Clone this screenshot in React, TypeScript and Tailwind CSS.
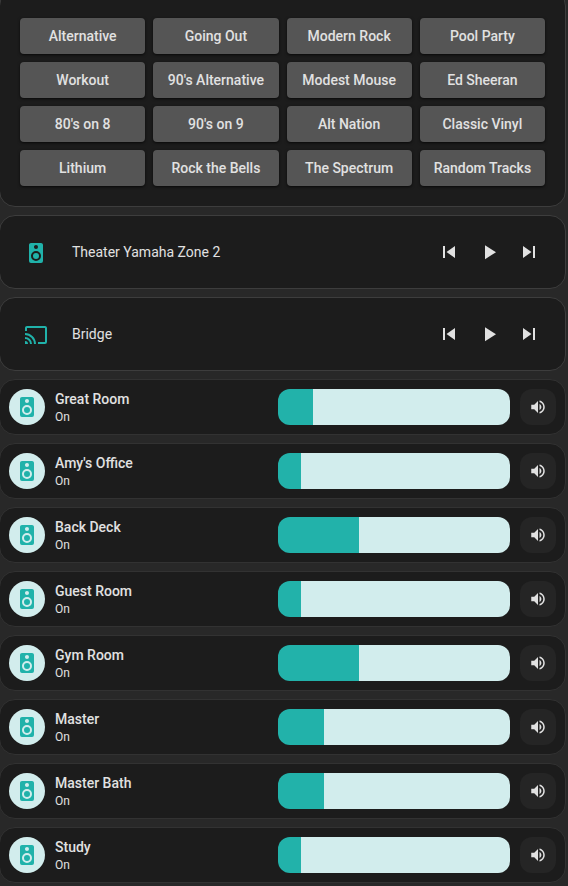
import { useState } from "react";

const ICONS = {
  speaker:
    "M12,12A3,3 0 0,0 9,15A3,3 0 0,0 12,18A3,3 0 0,0 15,15A3,3 0 0,0 12,12M12,20A5,5 0 0,1 7,15A5,5 0 0,1 12,10A5,5 0 0,1 17,15A5,5 0 0,1 12,20M12,4A2,2 0 0,1 14,6A2,2 0 0,1 12,8C10.89,8 10,7.1 10,6C10,4.89 10.89,4 12,4M17,2H7C5.89,2 5,2.89 5,4V20A2,2 0 0,0 7,22H17A2,2 0 0,0 19,20V4C19,2.89 18.1,2 17,2Z",
  cast: "M1,10V12A9,9 0 0,1 10,21H12C12,14.92 7.07,10 1,10M1,14V16A5,5 0 0,1 6,21H8A7,7 0 0,0 1,14M1,18V21H4A3,3 0 0,0 1,18M21,3H3C1.89,3 1,3.89 1,5V8H3V5H21V19H14V21H21A2,2 0 0,0 23,19V5C23,3.89 22.1,3 21,3Z",
  previous: "M6,18V6H8V18H6M9.5,12L18,6V18L9.5,12Z",
  play: "M8,5.14V19.14L19,12.14L8,5.14Z",
  next: "M16,18H18V6H16M6,18L14.5,12L6,6V18Z",
  volume:
    "M14,3.23V5.29C16.89,6.15 19,8.83 19,12C19,15.17 16.89,17.84 14,18.7V20.77C18,19.86 21,16.28 21,12C21,7.72 18,4.14 14,3.23M16.5,12C16.5,10.23 15.5,8.71 14,7.97V16C15.5,15.29 16.5,13.76 16.5,12M3,9V15H7L12,20V4L7,9H3Z",
};

type IconName = keyof typeof ICONS;

const PLAYLISTS = [
  "Alternative", "Going Out", "Modern Rock", "Pool Party",
  "Workout", "90's Alternative", "Modest Mouse", "Ed Sheeran",
  "80's on 8", "90's on 9", "Alt Nation", "Classic Vinyl",
  "Lithium", "Rock the Bells", "The Spectrum", "Random Tracks",
];

const PLAYERS: { name: string; icon: IconName }[] = [
  { name: "Theater Yamaha Zone 2", icon: "speaker" },
  { name: "Bridge", icon: "cast" },
];

const ROOMS = [
  { name: "Great Room", volume: 15 },
  { name: "Amy's Office", volume: 10 },
  { name: "Back Deck", volume: 35 },
  { name: "Guest Room", volume: 10 },
  { name: "Gym Room", volume: 35 },
  { name: "Master", volume: 20 },
  { name: "Master Bath", volume: 20 },
  { name: "Study", volume: 10 },
];

function Icon({ name, className }: { name: IconName; className: string }) {
  return (
    <svg viewBox="0 0 24 24" fill="currentColor" aria-hidden="true" className={className}>
      <path d={ICONS[name]} />
    </svg>
  );
}

function PlaylistCard() {
  return (
    <section className="-mt-2.5 grid grid-cols-4 gap-2 rounded-2xl border border-[#3d3d3d] bg-[#1c1c1c] px-5 pt-[27px] pb-5">
      {PLAYLISTS.map((name) => (
        <button
          key={name}
          type="button"
          className="h-9 rounded bg-[#555555] text-sm font-medium whitespace-nowrap shadow-sm shadow-black/60"
        >
          {name}
        </button>
      ))}
    </section>
  );
}

function PlayerCard({ name, icon }: { name: string; icon: IconName }) {
  return (
    <section className="flex items-center rounded-2xl border border-[#3d3d3d] bg-[#1c1c1c] py-4 pr-4 pl-6">
      <Icon name={icon} className="mt-0.5 size-6 text-[#20b2aa]" />
      <h2 className="ml-6 flex-1 text-sm">{name}</h2>
      {(["previous", "play", "next"] as const).map((action) => (
        <button key={action} type="button" aria-label={action} className="grid size-10 place-items-center">
          <Icon name={action} className="size-6" />
        </button>
      ))}
    </section>
  );
}

function RoomCard({ name, volume }: { name: string; volume: number }) {
  const [level, setLevel] = useState(volume);
  const id = name.replace(/\W/g, "-");
  return (
    <section className="grid grid-cols-[259fr_278fr] gap-2.5 rounded-2xl border border-[#323232] bg-[#1c1c1c] p-[9px]">
      <div className="flex items-center gap-2.5">
        <span className="grid size-9 place-items-center rounded-full bg-[#d2eded] text-[#20b2aa]">
          <Icon name="speaker" className="size-6" />
        </span>
        <div>
          <label htmlFor={id} className="block text-sm font-medium">
            {name}
          </label>
          <p className="text-xs">On</p>
        </div>
      </div>
      <div className="flex gap-2.5">
        <input
          id={id}
          type="range"
          min={0}
          max={100}
          value={level}
          onChange={(e) => setLevel(Number(e.target.value))}
          className="h-9 min-w-0 flex-1 appearance-none rounded-xl [&::-webkit-slider-thumb]:size-0 [&::-webkit-slider-thumb]:appearance-none"
          style={{ background: `linear-gradient(to right, #22b2aa ${level}%, #d2eded ${level}%)` }}
        />
        <button
          type="button"
          aria-label={`Mute ${name}`}
          className="grid size-9 place-items-center rounded-xl bg-[#252525]"
        >
          <Icon name="volume" className="size-[18px]" />
        </button>
      </div>
    </section>
  );
}

export default function App() {
  return (
    <div className="overflow-hidden bg-[#282828] font-[Roboto,sans-serif] text-[#e1e1e1]">
      <main className="mr-0.5 -ml-px flex min-h-screen flex-col gap-2 pb-[3px]">
        <PlaylistCard />
        {PLAYERS.map((player) => (
          <PlayerCard key={player.name} {...player} />
        ))}
        {ROOMS.map((room) => (
          <RoomCard key={room.name} {...room} />
        ))}
      </main>
    </div>
  );
}
